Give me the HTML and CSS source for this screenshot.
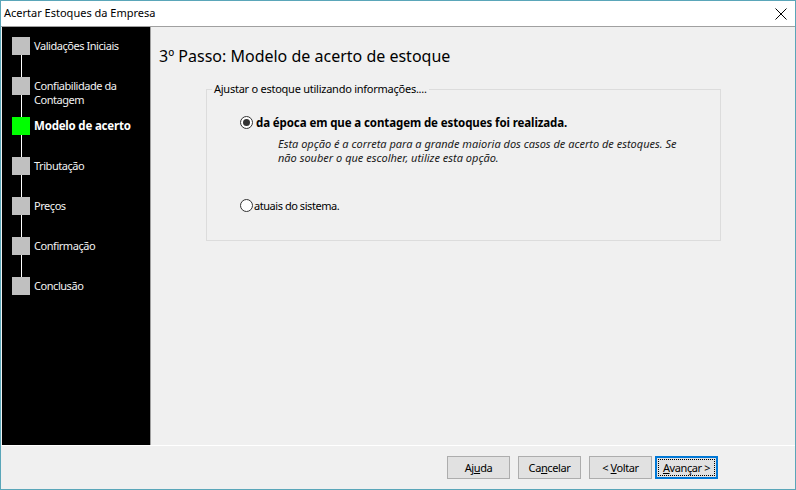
FILE: index.html
```html
<!DOCTYPE html>
<html lang="pt-BR">
<head>
  <meta charset="UTF-8" />
  <title>Acertar Estoques da Empresa</title>
  <link rel="stylesheet" href="styles.css">
</head>
<body>
  <div class="window">
    <div class="titlebar">
      <span class="title">Acertar Estoques da Empresa</span>
      <svg class="close" width="12" height="12" viewBox="0 0 12 12">
        <path d="M0.5 0.5 L11.5 11.5 M11.5 0.5 L0.5 11.5" stroke="#000" stroke-width="1" fill="none" />
      </svg>
    </div>

    <div class="main">
      <!-- wizard steps -->
      <ul class="steps">
        <li class="step"><span class="box"></span><span class="label">Validações Iniciais</span></li>
        <li class="step"><span class="box"></span><span class="label">Confiabilidade da<br>Contagem</span></li>
        <li class="step current"><span class="box"></span><span class="label">Modelo de acerto</span></li>
        <li class="step"><span class="box"></span><span class="label">Tributação</span></li>
        <li class="step"><span class="box"></span><span class="label">Preços</span></li>
        <li class="step"><span class="box"></span><span class="label">Confirmação</span></li>
        <li class="step"><span class="box"></span><span class="label">Conclusão</span></li>
      </ul>

      <div class="content">
        <h1>3º Passo: Modelo de acerto de estoque</h1>

        <fieldset class="group">
          <legend>Ajustar o estoque utilizando informações....</legend>

          <div class="group-body">
            <label class="option first">
              <span class="radio checked"></span>
              <b>da época em que a contagem de estoques foi realizada.</b>
            </label>
            <p class="hint">Esta opção é a correta para a grande maioria dos casos de acerto de estoques. Se<br>não souber o que escolher, utilize esta opção.</p>

            <label class="option second">
              <span class="radio"></span>
              <span>atuais do sistema.</span>
            </label>
          </div>
        </fieldset>
      </div>
    </div>

    <div class="footer">
      <button class="btn">Aj<u>u</u>da</button>
      <button class="btn">Ca<u>n</u>celar</button>
      <button class="btn back">&lt; <u>V</u>oltar</button>
      <button class="btn default"><span class="focus"><u>A</u>vançar &gt;</span></button>
    </div>
  </div>
</body>
</html>
```

FILE: styles.css
```css
* {
  box-sizing: border-box;
}

body {
  margin: 0;
  padding: 0;
  font-family: 'Noto Sans', 'Open Sans', sans-serif;
  font-size: 11px;
  color: #000;
}

.window {
  width: 796px;
  height: 490px;
  border: 1px solid #5aa6b9;
  background: #f0f0f0;
  display: flex;
  flex-direction: column;
}

.titlebar {
  height: 26px;
  background: #fff;
  border-bottom: 1px solid #a0a0a0;
  display: flex;
  align-items: center;
  justify-content: space-between;
  padding: 0 8px 1px 3px;
}

.title {
  font-size: 11px;
  line-height: 16px;
}

.close {
  display: block;
  margin-top: 1px;
}

.main {
  height: 418px;
  display: flex;
  padding-left: 1px;
}

/* sidebar */
.steps {
  position: relative;
  width: 148px;
  margin: 0;
  padding: 10px 0 0 10px;
  list-style: none;
  background: #000;
}

.steps::before {
  content: '';
  position: absolute;
  left: 19px;
  top: 20px;
  height: 240px;
  width: 1px;
  background: #fff;
}

.step {
  position: relative;
  display: flex;
  align-items: flex-start;
  height: 40px;
}

.box {
  flex: none;
  width: 18px;
  height: 18px;
  background: #c0c0c0;
}

.current .box {
  background: #00ff00;
}

.label {
  margin-left: 4px;
  margin-top: 2px;
  color: #f2f2f2;
  font-size: 11px;
  letter-spacing: -0.45px;
  line-height: 13.5px;
}

.current .label {
  color: #fff;
  font-weight: bold;
  font-size: 11.5px;
  letter-spacing: -0.2px;
}

/* content */
.content {
  flex: 1;
  border-left: 1px solid #a0a0a0;
  padding: 18px 0 0 8px;
}

h1 {
  margin: 0;
  font-size: 16px;
  font-weight: normal;
  line-height: 22px;
  color: #000;
}

.group {
  width: 515px;
  margin: 15px 0 0 47px;
  padding: 0 0 27px 0;
  border: 1px solid #dcdcdc;
  border-radius: 0;
}

.group legend {
  padding: 0 2px;
  margin-left: 5px;
  font-size: 11px;
  letter-spacing: -0.25px;
  line-height: 14px;
}

.group-body {
  padding: 18px 0 0 33px;
}

.option {
  display: flex;
  align-items: center;
  height: 16px;
  font-size: 11px;
  letter-spacing: -0.45px;
}

.option b {
  font-size: 11.5px;
  letter-spacing: -0.1px;
}

.radio {
  position: relative;
  flex: none;
  width: 13px;
  height: 13px;
  margin-right: 3px;
  border: 1px solid #333;
  border-radius: 50%;
  background: #fff;
}

.radio.checked::after {
  content: '';
  position: absolute;
  left: 2px;
  top: 2px;
  width: 7px;
  height: 7px;
  border-radius: 50%;
  background: #333;
}

.hint {
  margin: 7px 0 0 38px;
  font-size: 11px;
  font-style: italic;
  line-height: 13.5px;
  color: #1a1a1a;
}

.option.second {
  margin-top: 33px;
}

.option.second .radio {
  margin-right: 1px;
}

/* footer */
.footer {
  flex: 1;
  border-top: 1px solid #fff;
  display: flex;
  justify-content: flex-end;
  align-items: flex-start;
  padding: 10px 77px 0 0;
}

.btn {
  width: 63px;
  height: 23px;
  margin-left: 10px;
  padding: 0;
  font-family: inherit;
  font-size: 11px;
  letter-spacing: -0.4px;
  white-space: nowrap;
  background: #e1e1e1;
  border: 1px solid #adadad;
  color: #000;
}

.btn + .btn {
  margin-left: 8px;
}

.btn.default {
  margin-left: 3px;
  border: 2px solid #0078d7;
  padding: 1px;
}

.focus {
  display: flex;
  align-items: center;
  justify-content: center;
  height: 100%;
  border: 1px dotted #000;
}
```
